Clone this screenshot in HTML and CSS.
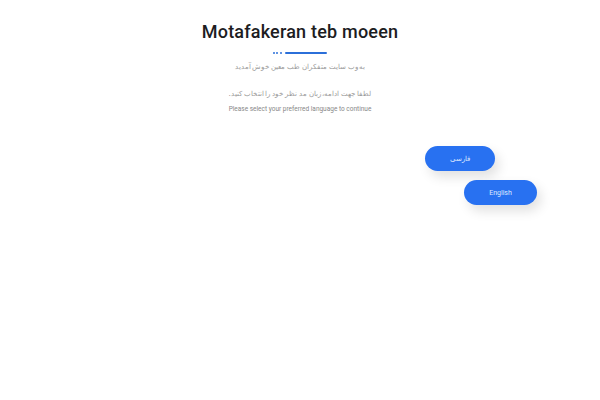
FILE: index.html
```html
<!DOCTYPE html>
<html lang="fa">
<head>
<meta charset="utf-8">
<link rel="stylesheet" href="styles.css">
</head>
<body>
<div class="page">
  <header class="head">
    <h1 class="title">Motafakeran teb moeen</h1>
    <div class="sep"><span class="dot"></span><span class="dot"></span><span class="dot"></span><span class="line"></span></div>
    <p class="welcome" dir="rtl">به وب سایت متفکران طب معین خوش آمدید</p>
    <p class="fa-note" dir="rtl">لطفا جهت ادامه، زبان مد نظر خود را انتخاب کنید.</p>
    <p class="en-note">Please select your preferred language to continue</p>
  </header>
  <div class="langs">
    <button class="btn btn-fa">فارسی</button>
    <button class="btn btn-en">English</button>
  </div>
</div>
</body>
</html>
```
FILE: styles.css
```css
html, body { margin: 0; padding: 0; background: #fff; }
body { font-family: Roboto, "Noto Sans", sans-serif; color: #222; width: 600px; height: 400px; overflow: hidden; }
.page { display: flex; flex-direction: column; }
.head { display: flex; flex-direction: column; align-items: center; padding-top: 21px; }
.title { margin: 0; font-size: 18px; font-weight: 500; line-height: 22px; color: #1d1d1f; letter-spacing: 0.2px; }
.sep { display: flex; align-items: center; gap: 1.5px; margin-top: 8px; height: 3px; }
.dot { width: 2px; height: 2px; border-radius: 50%; background: #2b6fd9; }
.line { width: 42px; height: 2px; background: #2b6fd9; border-radius: 1px; margin-left: 2px; }
.welcome, .fa-note, .en-note { margin: 0; font-size: 7px; color: #999; font-family: "Noto Sans", Roboto, sans-serif; }
.welcome { margin-top: 8px; line-height: 10px; }
.fa-note { margin-top: 17px; line-height: 10px; }
.en-note { margin-top: 5px; line-height: 10px; font-family: Roboto, sans-serif; font-size: 6.5px; color: #888; }
.langs { display: flex; flex-direction: column; align-items: flex-end; padding-right: 63px; padding-top: 32px; gap: 9px; }
.btn { border: none; background: #2871f1; color: #dfe9ff; font-size: 7px; border-radius: 13px; height: 25px; box-shadow: 4px 6px 12px rgba(0,0,0,0.12); font-family: "Noto Sans", Roboto, sans-serif; padding: 0; }
.btn-fa { width: 70px; margin-right: 42px; }
.btn-en { width: 73px; font-family: Roboto, sans-serif; }
```
